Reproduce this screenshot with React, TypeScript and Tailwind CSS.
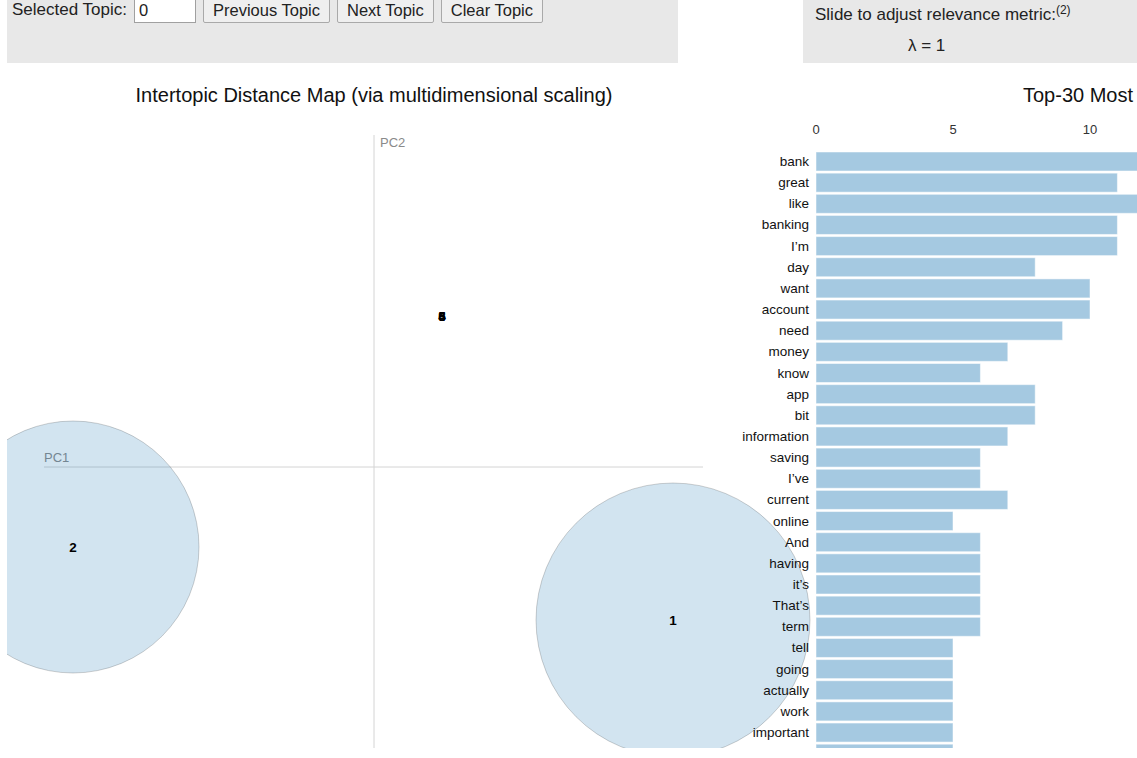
import React from 'react';

type Term = { term: string; value: number };

const terms: Term[] = [
  { term: 'bank', value: 12 },
  { term: 'great', value: 11 },
  { term: 'like', value: 12 },
  { term: 'banking', value: 11 },
  { term: 'I’m', value: 11 },
  { term: 'day', value: 8 },
  { term: 'want', value: 10 },
  { term: 'account', value: 10 },
  { term: 'need', value: 9 },
  { term: 'money', value: 7 },
  { term: 'know', value: 6 },
  { term: 'app', value: 8 },
  { term: 'bit', value: 8 },
  { term: 'information', value: 7 },
  { term: 'saving', value: 6 },
  { term: 'I’ve', value: 6 },
  { term: 'current', value: 7 },
  { term: 'online', value: 5 },
  { term: 'And', value: 6 },
  { term: 'having', value: 6 },
  { term: 'it’s', value: 6 },
  { term: 'That’s', value: 6 },
  { term: 'term', value: 6 },
  { term: 'tell', value: 5 },
  { term: 'going', value: 5 },
  { term: 'actually', value: 5 },
  { term: 'work', value: 5 },
  { term: 'important', value: 5 },
];

const BAR_X = 816;
const UNIT = 27.4;
const ROW_TOP = 152;
const ROW_STEP = 21.15;

function Button({ label }: { label: string }) {
  return (
    <button className="h-[26px] px-[9px] bg-[#efefef] border border-[#a9a9a9] rounded-[2px] text-[16.5px] text-[#222] leading-none">
      {label}
    </button>
  );
}

function ChartSvg() {
  return (
    <svg
      width={1130}
      height={685}
      viewBox="7 63 1130 685"
      className="block"
      style={{ fontFamily: '"Liberation Sans", Arial, sans-serif' }}
    >
      {/* intertopic distance map */}
      <text x={374} y={102} textAnchor="middle" fontSize={20} fill="#111">
        Intertopic Distance Map (via multidimensional scaling)
      </text>

      <line x1={374} y1={135} x2={374} y2={748} stroke="#d4d4d4" strokeWidth={1} />
      <text x={380} y={147} fontSize={13} fill="#8a8a8a">PC2</text>
      <line x1={44} y1={467} x2={703} y2={467} stroke="#d4d4d4" strokeWidth={1} />
      <text x={44} y={462} fontSize={13} fill="#8a8a8a">PC1</text>

      <circle cx={73} cy={547} r={126} fill="#1f77b4" fillOpacity={0.2} stroke="#000" strokeOpacity={0.18} />
      <text x={73} y={552} textAnchor="middle" fontSize={13.5} fontWeight="bold" fill="#000">2</text>

      <circle cx={673} cy={620} r={137} fill="#1f77b4" fillOpacity={0.2} stroke="#000" strokeOpacity={0.18} />
      <text x={673} y={625} textAnchor="middle" fontSize={13.5} fontWeight="bold" fill="#000">1</text>

      {/* the small topics all sit on top of each other */}
      <circle cx={442} cy={316} r={2} fill="#1f77b4" fillOpacity={0.2} stroke="#000" strokeOpacity={0.18} />
      <text x={442} y={321} textAnchor="middle" fontSize={13.5} fontWeight="bold" fill="#000">3</text>
      <text x={442} y={321} textAnchor="middle" fontSize={13.5} fontWeight="bold" fill="#000">4</text>
      <text x={442} y={321} textAnchor="middle" fontSize={13.5} fontWeight="bold" fill="#000">5</text>
      <text x={442} y={321} textAnchor="middle" fontSize={13.5} fontWeight="bold" fill="#000">6</text>

      {/* bar chart */}
      <text x={1023} y={102} fontSize={20} fill="#111">
        Top-30 Most
      </text>
      {[0, 5, 10].map((t) => (
        <text key={t} x={BAR_X + t * UNIT} y={134} textAnchor="middle" fontSize={13} fill="#333">
          {t}
        </text>
      ))}

      {terms.map((d, i) => {
        const y = ROW_TOP + i * ROW_STEP;
        return (
          <g key={d.term}>
            <rect
              x={BAR_X}
              y={y}
              width={d.value * UNIT}
              height={19}
              fill="#1f77b4"
              fillOpacity={0.4}
              stroke="#fff"
              strokeOpacity={0.5}
            />
            <text x={809} y={y + 14} textAnchor="end" fontSize={13.5} fill="#111">
              {d.term}
            </text>
          </g>
        );
      })}
      {/* next row, only its bar peeks in at the bottom */}
      <rect
        x={BAR_X}
        y={ROW_TOP + terms.length * ROW_STEP}
        width={5 * UNIT}
        height={19}
        fill="#1f77b4"
        fillOpacity={0.4}
        stroke="#fff"
        strokeOpacity={0.5}
      />
    </svg>
  );
}

export default function App() {
  return (
    <div className="w-[1137px] h-[758px] overflow-hidden bg-white font-['Liberation_Sans',Arial,sans-serif] text-[#222]">
      <div className="flex h-[63px]">
        <div className="ml-[7px] w-[671px] h-full bg-[#e8e8e8] px-[5px]">
          <div className="-mt-[3px] flex items-center h-[26px]">
            <span className="text-[17px] mr-[7px]">Selected Topic:</span>
            <input
              readOnly
              value="0"
              className="w-[62px] h-[25px] mr-[7px] bg-white border border-[#a0a0a0] px-[4px] text-[16.5px] outline-none"
            />
            <div className="flex gap-[7px]">
              <Button label="Previous Topic" />
              <Button label="Next Topic" />
              <Button label="Clear Topic" />
            </div>
          </div>
        </div>
        <div className="ml-[125px] flex-1 h-full bg-[#e8e8e8] pl-[12px] pt-[4px]">
          <div className="text-[17px] leading-[22px]">
            Slide to adjust relevance metric:<sup className="text-[12px]">(2)</sup>
          </div>
          <div className="pl-[93px] mt-[9px] text-[17px] leading-[22px]">λ = 1</div>
        </div>
      </div>
      <div className="ml-[7px]">
        <ChartSvg />
      </div>
    </div>
  );
}
